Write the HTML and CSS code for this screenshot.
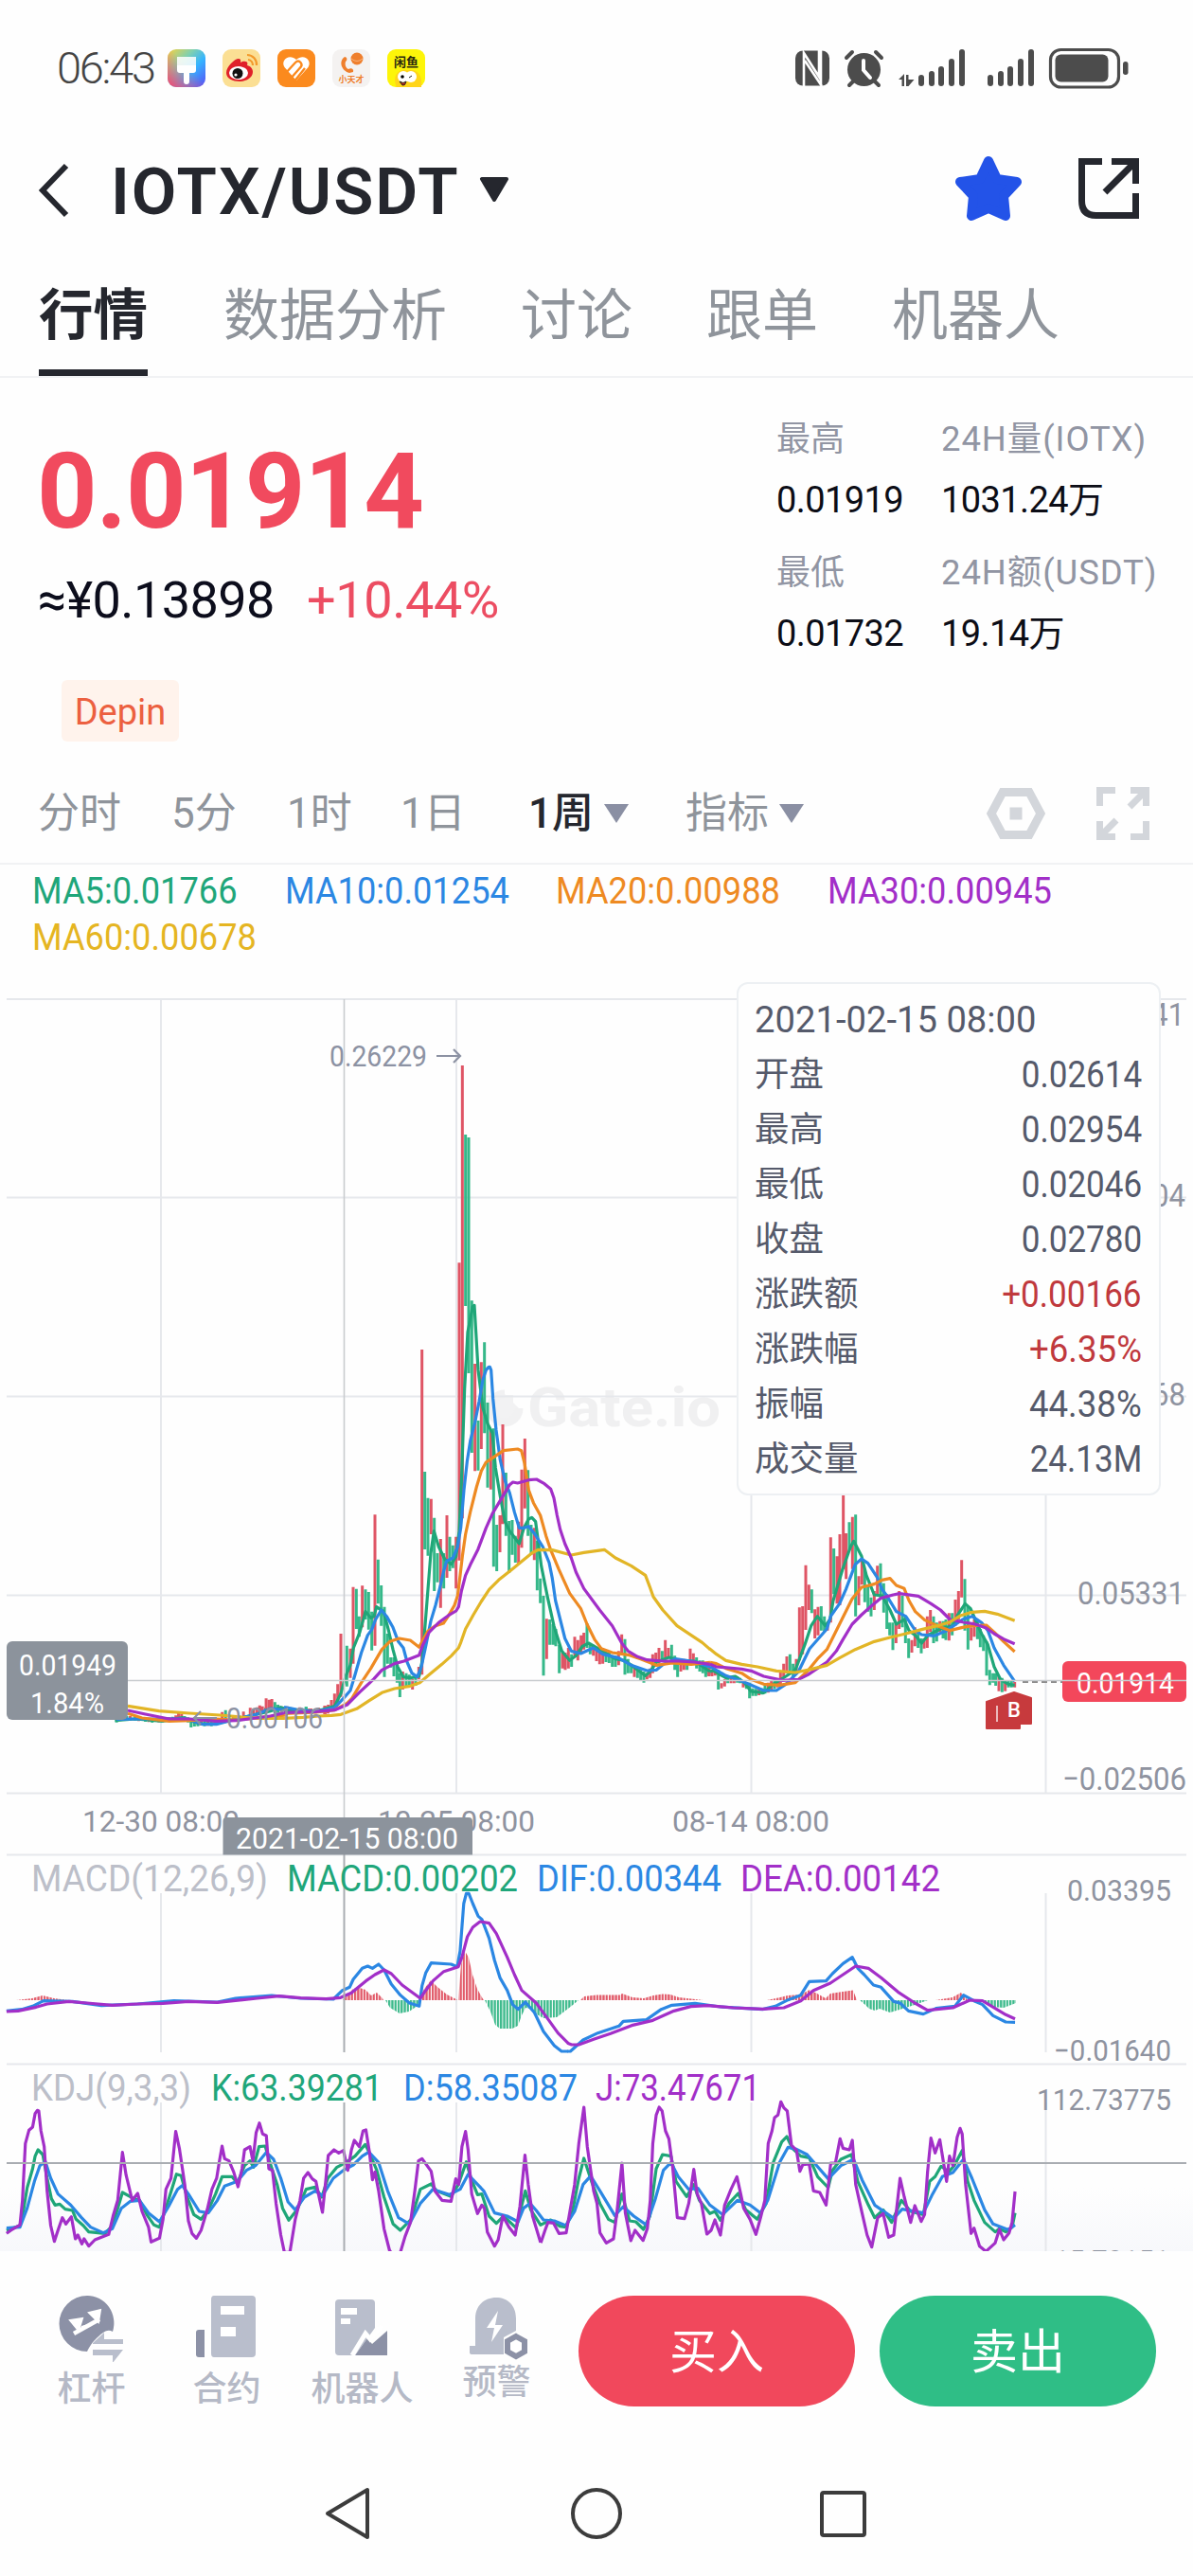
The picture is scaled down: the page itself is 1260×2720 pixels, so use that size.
FILE: index.html
```html
<!DOCTYPE html>
<html lang="zh-CN">
<head>
<meta charset="utf-8">
<title>IOTX/USDT</title>
<link rel="stylesheet" href="styles.css">
</head>
<body>
<header class="status">
  <div class="status-left">
    <span class="clock">06:43</span>
    <svg class="app" viewBox="0 0 40 40">
      <defs>
        <linearGradient id="themeA" x1="0" y1="0" x2="1" y2="1"><stop offset="0" stop-color="#f7d23e"/><stop offset=".35" stop-color="#7fd0b0"/><stop offset=".6" stop-color="#35b4ff"/><stop offset="1" stop-color="#5a4bf5"/></linearGradient>
        <linearGradient id="themeB" x1="1" y1="0" x2="0" y2="1"><stop offset=".45" stop-color="#ff5a6a" stop-opacity="0"/><stop offset="1" stop-color="#ff3f6a"/></linearGradient>
      </defs>
      <rect width="40" height="40" rx="9" fill="url(#themeA)"/><rect width="40" height="40" rx="9" fill="url(#themeB)"/>
      <path d="M10 8h20v9H10z" fill="#fff" opacity=".85"/><path d="M10 17h20v5q0 3-3 3h-4v9a3 3 0 0 1-6 0v-9h-4q-3 0-3-3z" fill="#fff"/>
    </svg>
    <svg class="app" viewBox="0 0 40 40">
      <rect width="40" height="40" rx="9" fill="#fbdf94"/>
      <path d="M4 25c0-7 9-15 13-15 3 0 2 3 2 4 3-2 9-2 7 3 4 1 6 4 6 7 0 6-7 10-14 10S4 31 4 25z" fill="#e0202a"/>
      <ellipse cx="17" cy="25" rx="10" ry="7" fill="#fff"/><circle cx="16" cy="25.500" r="5.500" fill="#111"/><circle cx="14" cy="27" r="1.600" fill="#fff"/>
      <path d="M26 6a10 10 0 0 1 10 11M27 11a6 6 0 0 1 5 6" fill="none" stroke="#f39a2b" stroke-width="2.200"/>
    </svg>
    <svg class="app" viewBox="0 0 40 40">
      <rect width="40" height="40" rx="9" fill="#fb8a1e"/>
      <path d="M20 33 7.500 19C3 12 12 4 20 11c8-7 17 1 12.500 8z" fill="#fff"/>
      <path d="M8 26 19 14q3-3 5.500 0t-1 6L13 32M17 35 29 20" fill="none" stroke="#fb8a1e" stroke-width="2.400"/>
    </svg>
    <svg class="app" viewBox="0 0 40 40">
      <rect width="40" height="40" rx="9" fill="#f4f2f1"/>
      <path d="M13 8c-7 5-3 15 5 17l4-1c1-3-2-5-5-3-3-1-4-5-3-8 2-1 2-5-1-5z" fill="#ef7f2d"/>
      <circle cx="26" cy="10" r="6.500" fill="#ef7f2d"/><path d="M20 10q6 5 12 0" stroke="#f9b27a" fill="none"/>
      <text x="20" y="34.500" class="tiny orange">小天才</text>
    </svg>
    <svg class="app" viewBox="0 0 40 40">
      <rect width="40" height="40" rx="9" fill="#fdf509"/>
      <path d="M10 40C4 26 14 20 22 22c8-2 16 4 14 18z" fill="#ffd51a"/><circle cx="17" cy="29" r="6" fill="#fff"/><circle cx="25" cy="29" r="6" fill="#fff"/><circle cx="16" cy="29" r="1.800"/><path d="M23 30l3-2M13 34q4 3 7 0-1 5-4 4z" stroke="#222" fill="#c22"/>
      <text x="20" y="17.500" class="tiny dark">闲鱼</text>
    </svg>
  </div>
  <svg class="status-right" viewBox="841 50 352 44">
    <g fill="#4c4c4c">
      <rect x="841" y="53.500" width="36" height="37" rx="8"/>
      <path d="M850 91V56l16 25V58M866 53v8M851 64l18 27M868 90V53" fill="none" stroke="#fff" stroke-width="2.600"/>
      <circle cx="913.500" cy="73.500" r="17.500"/>
      <path d="M895 61l6-6M932 61l-6-6M898 90l5-5M929 90l-5-5" stroke="#4c4c4c" stroke-width="4" stroke-linecap="round"/>
      <path d="M913 64v10l7 8" stroke="#fff" stroke-width="4" fill="none" stroke-linecap="round"/>
      <path d="M950 84l6-6v13h-2.500V84zM958 79h2.500v5h6l-6 7H958z"/>
      <rect x="971" y="79" width="6" height="12" rx="3"/><rect x="982" y="75" width="6" height="16" rx="3"/><rect x="992" y="70" width="6" height="21" rx="3"/><rect x="1003" y="62" width="6" height="29" rx="3"/><rect x="1014" y="52" width="6" height="39" rx="3"/>
      <rect x="1044" y="79" width="6" height="12" rx="3"/><rect x="1055" y="75" width="6" height="16" rx="3"/><rect x="1065" y="70" width="6" height="21" rx="3"/><rect x="1076" y="62" width="6" height="29" rx="3"/><rect x="1087" y="52" width="6" height="39" rx="3"/>
      <rect x="1110.500" y="52.500" width="72" height="39.500" rx="11" fill="none" stroke="#4c4c4c" stroke-width="3.200"/>
      <rect x="1115.500" y="57.500" width="56" height="29" rx="6"/><rect x="1187" y="65" width="5.500" height="14" rx="2.700"/>
    </g>
  </svg>
</header>

<nav class="titlebar">
  <svg class="back" viewBox="0 0 36 60"><path d="M31 4 6 30l25 26" fill="none" stroke="#25272e" stroke-width="6"/></svg>
  <h1>IOTX/USDT</h1>
  <svg class="caret" viewBox="0 0 32 28"><path d="M3 2h26L16 24z" fill="#25272e" stroke="#25272e" stroke-width="4" stroke-linejoin="round"/></svg>
  <svg class="star" viewBox="0 0 72 70"><path d="M36 6 45 25 66 28 52 43 54 64 36 56 18 64 20 43 6 28 27 25z" fill="#2353e8" stroke="#2353e8" stroke-width="10" stroke-linejoin="round"/></svg>
  <svg class="share" viewBox="0 0 66 66"><path d="M26 4.500H4.500V46q0 15.500 15 15.500H61.500V38M36 4.500h25.500V28M61 5 29 37" fill="none" stroke="#25272e" stroke-width="7"/></svg>
</nav>

<nav class="tabs"><a class="on">行情</a><a>数据分析</a><a>讨论</a><a>跟单</a><a>机器人</a></nav>

<section class="quote">
  <div class="quote-main">
    <div class="price">0.01914</div>
    <div class="sub"><span>≈¥0.13898</span><span class="up">+10.44%</span></div>
    <span class="tag">Depin</span>
  </div>
  <dl class="stats">
    <div><dt>最高</dt><dd>0.01919</dd></div><div class="wide"><dt>24H量(IOTX)</dt><dd>1031.24万</dd></div>
    <div><dt>最低</dt><dd>0.01732</dd></div><div class="wide"><dt>24H额(USDT)</dt><dd>19.14万</dd></div>
  </dl>
</section>

<nav class="periods">
  <a>分时</a><a>5分</a><a>1时</a><a>1日</a>
  <a class="on">1周<svg viewBox="0 0 26 20"><path d="M0 0h26L13 20z"/></svg></a>
  <a>指标<svg viewBox="0 0 26 20"><path d="M0 0h26L13 20z"/></svg></a>
  <svg class="hex" viewBox="0 0 62 54"><path d="M17 4.500h28L57 27 45 49.500H17L5 27z" fill="none" stroke="#d3d6db" stroke-width="9"/><path d="M24.500 20.500h13v13h-13z" fill="#d3d6db"/></svg>
  <svg class="expand" viewBox="0 0 56 56"><path d="M3.500 20V3.500H20M36 3.500h16.500V20M52 4 35 21M52.500 36v16.500H36M20 52.500H3.500V36M4 52l17-17" fill="none" stroke="#d3d6db" stroke-width="7"/></svg>
</nav>

<div class="legend"><span class="c5"><i>MA5:0.01766</i></span><span class="c10"><i>MA10:0.01254</i></span><span class="c20"><i>MA20:0.00988</i></span><span class="c30"><i>MA30:0.00945</i></span><span class="c60"><i>MA60:0.00678</i></span></div>

<main class="chart">
<svg class="plot" viewBox="0 1020 1260 1357" width="1260" height="1357">
  <defs>
    <pattern id="barsUp" width="3.280" height="8" patternUnits="userSpaceOnUse"><rect width="2.300" height="8" fill="#e15a69"/></pattern>
    <pattern id="barsDown" width="3.280" height="8" patternUnits="userSpaceOnUse"><rect width="2.300" height="8" fill="#3dba8c"/></pattern>
    <linearGradient id="foot" x1="0" y1="0" x2="0" y2="1"><stop offset="0" stop-color="#f7f8fb" stop-opacity="0"/><stop offset="1" stop-color="#f7f8fb"/></linearGradient>
  </defs>
  <rect x="0" y="2310" width="1260" height="67" fill="url(#foot)"/>
  <g class="mark">
    <path d="M533 1472a15 15 0 1 0 15 15" fill="none" stroke="#f1f1f2" stroke-width="9"/>
    <path d="M533 1473h9v14h-9z"/>
    <text x="557" y="1506" textLength="204" lengthAdjust="spacingAndGlyphs">Gate.io</text>
  </g>
  <g class="grid">
    <path d="M7 1055H1253M7 1264.500H1253M7 1474.500H1253M7 1684.500H1253M7 1893.500H1253M7 1958.500H1253M7 2179.500H1253"/>
    <path d="M170 1055V1893M482 1055V1893M793.500 1055V1893M1104.500 1055V1893"/>
    <path d="M170 1999V2167M482 1999V2167M793.500 1999V2167M1104.500 1999V2167M170 2220V2377M482 2220V2377M793.500 2220V2377M1104.500 2220V2377"/>
  </g>

  <g class="axis">
    <text x="1139" y="1083" textLength="112" lengthAdjust="spacingAndGlyphs">0.28841</text>
    <text x="1139" y="1274" textLength="113" lengthAdjust="spacingAndGlyphs">0.21004</text>
    <text x="1139" y="1484" textLength="113" lengthAdjust="spacingAndGlyphs">0.13168</text>
    <text x="1138" y="1694" textLength="113" lengthAdjust="spacingAndGlyphs">0.05331</text>
    <text x="1122" y="1890" textLength="131" lengthAdjust="spacingAndGlyphs">−0.02506</text>
    <g class="small">
      <text x="87" y="1934" textLength="166" lengthAdjust="spacingAndGlyphs">12-30 08:00</text>
      <text x="399" y="1934" textLength="166" lengthAdjust="spacingAndGlyphs">10-25 08:00</text>
      <text x="710" y="1934" textLength="166" lengthAdjust="spacingAndGlyphs">08-14 08:00</text>
      <text x="1127" y="2007" textLength="110" lengthAdjust="spacingAndGlyphs">0.03395</text>
      <text x="1113" y="2176" textLength="124" lengthAdjust="spacingAndGlyphs">−0.01640</text>
      <text x="1095" y="2228" textLength="142" lengthAdjust="spacingAndGlyphs">112.73775</text>
      <text x="1113" y="2397.500" textLength="122" lengthAdjust="spacingAndGlyphs">15.73151</text>
    </g>
  </g>

  <!-- candles -->
  <g transform="translate(0 1700) scale(.35714 .33333)">
    <path class="k down" d="M345 340V356M355 338V352M375 336V350M400 335V350M430 342V354M450 345V357M480 342V356M510 338V352M546 336V350M556 340V356M565 346V372M575 348V369M585 352V368M605 350V368M625 350V368M667 317V352M705 335V350M785 310V325M813 292V328M822 300V326M850 310V328M880 312V330M905 307V325M932 312V326"/>
    <path class="k up" d="M385 336V350M410 338V352M440 342V355M470 342V356M500 340V354M520 334V350M528 322V345M537 330V348M595 350V366M615 348V367M635 345V364M657 323V355M690 338V352M720 322V342M740 310V335M750 314V333M760 308V330M768 302V325M776 305V326M787 280V320M796 284V318M804 282V318M832 305V328M870 314V330M890 314V330M920 312V328M945 312V327M960 304V330M970 306V328"/>
  </g>
  <g transform="translate(300 1400) scale(.33333)">
    <path class="k up" d="M10 1205V1225M30 1212V1230M50 1208V1228M80 1212V1228M110 1210V1226M130 1203V1230M140 1200V1225M150 1185V1215M160 1165V1212M170 1135V1200M180 975V1175M210 1022V1115M219 827V1070M248 823V955M288 598V1013M376 1095V1152M407 1118V1152M427 1080V1120M437 75V1105M466 548V660M496 675V893M516 600V798M545 668V832M555 -200V743M565 -825V610M605 120V460M625 115V390M655 330V518M684 600V717M693 312V628M743 620V755M753 455V703M763 357V578M793 640V742M832 928V1055M882 1035V1085M891 1035V1090M901 1020V1085M921 985V1045M931 995V1060M941 980V1040M950 972V1025M980 1010V1045M990 1020V1062M1000 1025V1072M1010 1030V1070M1060 1030V1075M1070 977V1040M1110 1080V1112M1150 1100V1120M1160 1085V1115M1168 1040V1100M1178 1035V1080M1188 1020V1070M1208 995V1055M1218 1020V1050M1257 1055V1095M1267 1055V1090M1287 1022V1070M1297 1037V1070"/>
    <path class="k down" d="M20 1208V1226M70 1207V1226M100 1212V1228M199 1013V1142M229 833V960M238 920V985M258 835V930M268 843V962M278 905V1028M298 740V880M308 822V950M318 890V1112M328 975V1070M338 1050V1082M348 1050V1110M358 1075V1130M367 1100V1176M387 1100V1140M397 1105V1140M417 1110V1140M446 462V708M456 545V728M476 608V840M486 720V812M506 720V832M525 668V777M535 695V767M575 -606V-63M585 -597V150M595 -80V402M615 300V458M635 52V340M645 243V512M664 325V763M674 630V777M703 465V665M713 618V783M723 615V725M733 665V750M773 457V665M783 630V725M802 680V838M812 800V878M822 855V1108M842 930V1010M852 945V1010M861 960V1015M872 1010V1100M911 1040V1080M960 943V1020M970 1005V1040M1020 1030V1065M1030 1035V1068M1040 1045V1080M1050 1045V1080M1080 992V1105M1090 1055V1100M1100 1070V1100M1120 1090V1115M1130 1090V1125M1140 1095V1130M1198 1030V1065M1228 1010V1060M1238 1045V1090M1247 1060V1112M1277 1060V1090M1307 1050V1085M1317 1060V1095M1327 1060V1100M1337 1070V1105M1347 1075V1108"/>
  </g>
  <g transform="translate(740 1540) scale(.33333)">
    <path class="k up" d="M26 662V690M36 668V690M46 665V688M66 712V728M76 700V722M96 695V712M106 688V712M135 705V725M185 730V750M214 710V742M224 705V738M244 700V725M253 675V720M263 650V692M273 627V680M303 635V680M313 472V640M323 468V620M333 338V543M343 400V480M362 478V570M372 470V560M402 520V545M412 250V520M432 310V460M441 240V465M452 105V350M461 237V382M481 185V350M501 373V465M511 320V400M550 420V480M560 340V430M619 525V585M629 420V540M669 575V615M679 535V595M708 570V602M718 500V600M728 480V550M758 515V550M787 490V577M807 447V530M817 420V510M827 322V440M857 535V577M867 510V565M945 690V737M965 705V737M995 708V725"/>
    <path class="k down" d="M6 648V675M16 658V692M56 670V732M86 690V712M116 690V710M125 695V712M145 710V730M155 710V760M165 728V752M175 730V752M195 728V748M204 720V745M234 705V730M283 620V675M293 650V695M352 415V490M382 468V545M392 500V550M422 285V430M471 202V290M491 178V500M520 350V455M530 400V485M540 440V500M570 332V440M580 395V488M590 430V540M599 520V560M609 520V607M639 435V535M649 500V585M659 570V632M689 545V600M699 570V617M738 500V585M748 520V580M768 515V570M777 510V575M797 490V560M837 382V545M847 470V605M877 515V572M886 540V598M896 560V610M906 580V688M916 670V718M926 680V710M935 680V720M955 695V740M975 705V725M985 705V725"/>
  </g>

  <!-- moving averages -->
  <g class="line" transform="translate(0 1700) scale(.35714 .33333)">
    <polyline class="c5" points="340,350 400,345 480,352 540,341 590,360 640,360 700,345 800,320 830,308 860,318"/>
    <polyline class="c10" points="345,346 420,345 550,345 600,362 640,362 700,345 760,330 800,312 840,316"/>
    <polyline class="c20" points="378,328 420,342 500,352 560,350 640,345 700,348 800,337 850,333"/>
    <polyline class="c60" points="378,304 470,320 560,327 650,333 750,343 840,343"/>
    <polyline class="c30" points="378,318 430,330 500,345 560,345 640,352 700,350 800,336 840,326"/>
  </g>
  <g class="line" transform="translate(300 1400) scale(.33333)">
    <polyline class="c5" points="0,1218 100,1222 160,1205 180,1165 195,1110 210,1075 220,1020 240,970 258,905 275,925 285,920 293,890 315,905 330,960 345,1025 360,1080 378,1112 400,1115 428,1110 438,1060 450,910 465,720 475,650 490,700 510,740 530,755 545,730 555,650 563,470 572,200 582,20 590,-20 597,-60 603,-65 608,20 615,140 630,260 645,310 660,340 670,450 685,540 700,620 715,650 730,670 745,690 760,640 775,612 785,607 797,620 805,680 815,760 835,860 855,950 880,1030 905,1060 925,1045 945,1015 965,1005 1000,1025 1050,1055 1080,1060 1120,1090 1145,1108 1160,1095 1180,1065 1220,1050 1250,1060 1300,1062 1350,1095"/>
    <polyline class="c10" points="0,1208 40,1215 100,1222 160,1210 190,1178 210,1155 225,1105 245,1035 265,980 278,962 290,930 308,900 325,920 345,955 362,1000 378,1020 390,1065 405,1100 422,1112 435,1080 450,1010 465,935 480,885 495,825 505,780 515,745 535,735 550,700 560,640 570,520 580,430 590,365 605,305 618,240 630,170 640,140 648,131 652,130 656,140 662,230 672,330 685,425 700,490 715,530 730,590 745,640 760,640 775,635 795,660 820,700 840,750 850,800 860,870 875,930 890,990 910,1030 940,1038 980,1020 1010,1040 1060,1052 1100,1075 1150,1092 1180,1090 1200,1073 1240,1055 1290,1062 1350,1080"/>
    <polyline class="c20" points="0,1228 100,1224 160,1217 200,1195 215,1180 245,1130 275,1085 310,1025 335,1000 365,990 400,996 428,1018 440,995 455,968 480,950 505,942 520,920 540,885 550,855 558,790 565,730 575,660 590,590 610,510 625,460 640,432 670,412 695,395 740,390 752,395 762,435 775,520 790,560 812,600 830,665 845,710 870,770 905,847 940,895 960,945 985,995 1005,1022 1040,1035 1090,1042 1130,1055 1180,1075 1230,1068 1290,1072 1350,1066"/>
    <polyline class="c60" points="0,1243 60,1240 110,1236 150,1234 180,1231 230,1213 270,1187 310,1162 350,1149 400,1141 430,1130 460,1105 500,1072 530,1045 553,1020 560,1003 575,960 600,915 625,873 650,835 680,805 720,773 760,740 785,720 805,709 850,710 910,726 950,718 1015,709 1050,735 1100,760 1145,790 1160,830 1170,858 1200,900 1245,950 1290,980 1325,1003 1350,1025"/>
    <polyline class="c30" points="0,1225 100,1222 160,1217 200,1200 240,1160 285,1118 310,1090 350,1070 380,1062 428,1043 440,1010 460,970 490,940 520,918 545,903 553,890 562,840 575,790 590,757 615,707 640,640 660,595 690,545 715,503 725,495 740,498 775,488 800,486 825,500 845,517 855,545 865,600 875,645 890,690 910,735 925,780 950,832 1000,900 1040,950 1070,1005 1090,1030 1120,1048 1150,1058 1200,1062 1250,1062 1300,1065 1350,1072"/>
  </g>
  <g class="line" transform="translate(740 1540) scale(.33333)">
    <polyline class="c5" points="30,675 40,672 80,695 110,690 140,712 160,738 200,742 230,715 270,690 300,670 330,590 350,530 370,500 395,530 410,510 420,450 450,350 475,280 485,262 510,310 525,370 550,432 575,435 600,480 620,525 645,510 660,545 680,560 700,585 720,560 760,540 800,530 815,495 838,460 855,475 870,510 890,555 910,590 930,660 950,700 975,715 995,718"/>
    <polyline class="c10" points="30,660 40,665 80,688 130,705 165,720 200,735 240,735 270,715 310,675 345,603 400,540 412,500 440,460 460,415 490,335 510,318 530,332 560,378 575,415 590,435 620,485 650,500 680,545 700,558 740,562 780,545 830,510 860,500 890,520 910,545 930,600 960,655 995,706"/>
    <polyline class="c20" points="30,646 50,650 80,665 130,680 160,700 200,715 250,718 300,710 340,672 370,635 400,605 425,555 450,505 480,445 510,408 550,398 575,385 600,380 620,402 645,412 660,450 680,485 710,512 750,530 790,545 830,535 860,530 905,528 930,550 960,580 995,612"/>
    <polyline class="c30" points="30,652 50,660 130,667 160,673 200,690 260,703 310,700 340,685 370,665 400,645 430,610 450,575 480,525 510,495 540,468 570,443 610,432 630,428 690,436 730,460 760,480 790,510 830,518 870,525 905,537 930,555 960,572 995,587"/>
    <polyline class="c60" points="28,602 50,620 80,640 130,652 180,660 240,673 300,678 350,668 400,655 440,632 490,605 550,580 600,567 650,555 700,542 750,530 790,518 825,497 860,487 900,484 940,493 995,514"/>
  </g>

  <!-- MACD -->
  <path fill="url(#barsUp)" d="M17 2112 34 2110 45 2107 57 2110 72 2112z"/>
  <path fill="url(#barsUp)" d="M362 2112 373 2100 380 2099 386 2101 392 2107 398 2104 404 2110 405 2112zM443 2112 448 2100 455 2091 462 2098 472 2106 482 2111 483 2112zM484 2112 487 2074 491 2060 495 2067 499 2085 504 2100 509 2109 511 2112zM613 2112 617 2108 630 2106.500 655 2106.500 657 2105 668 2109 680 2110 690 2107 700 2105.500 708 2106 717 2109 743 2112zM810 2112 824 2109 832 2107 846 2106 855 2101 863 2105 872 2110 877 2105 890 2103 901 2101.500 905 2112zM988 2112 1006 2109 1015 2104 1022 2112z"/>
  <path fill="url(#barsDown)" d="M407 2112 412 2120 422 2126 432 2124 441 2118 443 2112zM512 2112 518 2124 523 2138 528 2142 541 2142 547 2139 551 2128 555 2120 560 2121 567 2127 574 2131 588 2130 596 2124 605 2117 611 2112zM908 2112 914 2117 918 2121 924 2123 929 2121 940 2125 950 2122 966 2117 980 2112zM1036 2112 1048 2119 1060 2120 1073 2115 1073 2112z"/>
  <g class="line" transform="translate(0 1930) scale(.38265 .33333)">
    <polyline class="c10" points="18,580 60,575 90,565 120,548 200,550 280,563 380,558 480,548 600,552 650,540 750,531 830,540 920,543 945,515 965,505 975,480 1000,445 1015,438 1028,445 1045,432 1060,450 1080,495 1105,530 1130,555 1157,565 1165,500 1175,460 1190,428 1245,432 1262,440 1270,390 1280,240 1287,208 1294,208 1305,240 1320,280 1330,290 1350,350 1365,420 1380,475 1400,515 1415,560 1430,575 1450,552 1475,585 1500,645 1530,690 1550,708 1568,708"/>
    <polyline class="c30" points="18,582 50,580 100,568 130,558 190,550 240,555 310,562 380,558 450,556 520,550 600,553 650,547 710,540 770,533 830,539 900,542 940,538 970,523 1010,485 1035,465 1060,450 1080,462 1110,498 1160,540 1175,515 1195,485 1225,455 1265,440 1275,410 1290,345 1305,315 1325,297 1350,302 1370,335 1400,410 1420,465 1440,515 1480,555 1510,602 1540,650 1568,682"/>
  </g>
  <g class="line" transform="translate(560 1930) scale(.44643 .33333)">
    <polyline class="c10" points="88,708 95,708 125,672 160,650 210,628 220,613 275,608 310,575 335,562 390,556 450,567 550,575 580,565 610,545 640,530 660,487 700,485 715,462 740,430 762,410 775,445 790,465 812,498 830,505 860,550 875,555 895,580 930,590 960,572 1005,565 1025,530 1050,548 1070,560 1095,595 1125,615 1147,616"/>
    <polyline class="c30" points="88,682 98,687 115,687 150,670 190,652 240,626 290,610 340,580 380,566 420,563 480,570 550,574 600,570 640,548 670,515 710,492 740,465 770,438 800,445 830,475 870,520 910,555 940,578 1000,570 1040,546 1070,548 1100,572 1125,592 1147,605"/>
  </g>

  <!-- KDJ -->
  <g class="line" transform="translate(0 1930) scale(.38265 .33333)">
    <polyline class="c5" points="18,1275 55,1260 65,1210 75,1140 90,1080 97,1040 105,1020 118,1035 130,1110 142,1175 152,1195 165,1192 180,1208 200,1212 210,1240 230,1260 245,1280 290,1285 310,1260 325,1205 338,1155 365,1172 385,1180 405,1225 425,1258 440,1265 455,1215 470,1160 487,1097 500,1102 515,1165 535,1225 555,1240 575,1210 595,1160 613,1105 640,1105 655,1125 675,1070 690,1055 700,1075 715,1010 732,1008 745,1060 765,1130 780,1205 797,1243 820,1210 845,1145 870,1138 888,1170 905,1110 930,1075 955,1060 980,1040 1008,1003 1020,1030 1040,1085 1060,1170 1085,1255 1105,1275 1135,1240 1160,1145 1190,1128 1205,1150 1245,1168 1265,1130 1287,1058 1300,1110 1318,1162 1330,1160 1350,1230 1370,1253 1390,1230 1425,1268 1437,1210 1450,1150 1465,1210 1492,1258 1520,1242 1545,1262 1562,1265"/>
    <polyline class="c10" points="18,1268 55,1265 75,1205 95,1120 110,1070 125,1057 140,1110 160,1160 195,1195 225,1235 250,1265 285,1283 310,1270 335,1205 360,1183 385,1180 410,1220 440,1248 465,1200 490,1145 503,1133 520,1160 550,1215 575,1220 600,1180 620,1135 655,1120 680,1085 705,1070 735,1028 755,1050 775,1110 795,1185 815,1210 840,1170 870,1150 890,1165 920,1110 950,1083 975,1068 1000,1040 1018,1027 1045,1060 1070,1150 1100,1235 1130,1255 1160,1190 1195,1145 1240,1162 1270,1145 1292,1098 1335,1150 1365,1220 1400,1230 1430,1248 1445,1205 1463,1190 1480,1212 1500,1242 1530,1245 1562,1260"/>
    <polyline class="c30" points="18,1285 30,1275 55,1258 62,1180 70,1000 80,958 90,948 97,905 103,895 107,897 113,960 122,1010 130,1150 140,1260 150,1310 160,1275 172,1235 182,1255 197,1232 208,1302 215,1290 226,1318 232,1302 245,1325 262,1305 300,1288 312,1230 325,1180 338,1028 348,1100 365,1180 380,1158 392,1215 410,1265 417,1312 440,1300 450,1240 458,1145 472,1110 485,962 495,1015 510,1130 520,1245 530,1285 542,1300 555,1275 572,1210 585,1145 598,1110 605,1060 613,1008 620,1048 632,1055 645,1090 657,1137 668,1080 675,1020 690,1010 698,1055 707,965 716,935 725,970 735,975 742,1080 752,1085 762,1190 775,1290 785,1345 800,1345 815,1240 828,1180 838,1110 850,1092 862,1112 872,1120 880,1165 890,1218 898,1130 906,1038 922,1020 935,1030 948,1022 960,1085 970,1020 978,990 992,1010 1002,960 1010,957 1020,1030 1028,1115 1035,1090 1045,1150 1060,1270 1075,1338 1082,1350 1105,1345 1118,1295 1133,1250 1145,1150 1155,1055 1165,1048 1190,1088 1200,1150 1220,1180 1245,1183 1258,1112 1266,1130 1275,1010 1285,962 1292,1020 1302,1160 1318,1222 1330,1195 1337,1205 1345,1280 1365,1325 1375,1305 1388,1230 1405,1265 1422,1290 1435,1200 1449,1037 1458,1130 1470,1230 1492,1313"/>
  </g>
  <g class="line" transform="translate(560 1930) scale(.44643 .33333)">
    <polyline class="c5" points="84,1265 100,1215 115,1110 127,1047 145,1120 165,1190 185,1240 200,1250 217,1160 235,1245 250,1248 268,1272 283,1230 298,1080 313,1035 333,1040 345,1120 370,1168 387,1130 400,1180 425,1222 437,1215 450,1243 470,1190 492,1158 510,1210 537,1240 558,1190 575,1060 595,995 607,978 620,1015 640,1040 660,1045 680,1105 705,1140 715,1085 735,1050 760,1035 775,1120 800,1195 815,1235 835,1210 855,1250 878,1180 900,1215 930,1225 945,1120 958,1105 972,1072 990,1090 1003,1070 1022,1022 1035,1120 1050,1180 1075,1250 1100,1280 1110,1270 1125,1280 1140,1265 1147,1220"/>
    <polyline class="c10" points="84,1260 105,1215 125,1130 143,1103 165,1150 200,1228 220,1200 245,1230 275,1258 295,1180 315,1085 333,1060 350,1105 375,1145 397,1142 425,1195 455,1225 490,1180 520,1195 545,1220 562,1180 590,1060 610,1012 630,1018 655,1035 705,1112 735,1070 765,1050 785,1115 815,1195 860,1237 880,1208 930,1220 950,1165 975,1105 1000,1092 1025,1050 1045,1110 1075,1210 1095,1255 1130,1273 1147,1258"/>
    <polyline class="c30" points="25,1315 35,1275 42,1250 55,1252 68,1285 85,1283 92,1230 105,1130 115,1000 127,885 135,1010 150,1150 158,1190 165,1283 180,1315 197,1302 205,1220 217,1062 225,1220 238,1308 248,1275 267,1307 277,1270 284,1180 290,1000 298,910 305,885 312,897 320,960 328,985 337,1075 348,1235 365,1238 375,1190 387,1082 395,1160 405,1190 418,1287 428,1275 437,1242 450,1290 460,1195 475,1145 489,1105 498,1160 505,1205 520,1240 534,1288 545,1235 555,1180 563,1000 572,960 578,918 586,910 593,868 600,887 608,897 618,1005 630,1022 638,1088 645,1067 660,1065 670,1150 685,1155 700,1195 711,1062 722,1062 733,985 740,1015 755,1020 762,990 770,1130 785,1220 797,1290 808,1328 822,1235 835,1222 848,1297 860,1290 875,1110 885,1170 900,1250 910,1197 925,1247 933,1225 940,1090 948,983 958,1030 969,988 985,1120 992,1040 1000,1070 1010,980 1017,952 1022,970 1030,1130 1043,1285 1050,1268 1063,1325 1078,1342 1100,1315 1110,1272 1120,1305 1133,1283 1140,1250 1147,1152"/>
  </g>

  <g class="extreme">
    <text x="348" y="1126" textLength="103" lengthAdjust="spacingAndGlyphs">0.26229</text>
    <path d="M461 1115H486M479 1108l7 7-7 7"/>
    <text x="239" y="1825" textLength="102" lengthAdjust="spacingAndGlyphs">0.00106</text>
    <path d="M229 1814H204M212 1807l-7 7 7 7"/>
  </g>
  <path d="M1080 1776H1122" stroke="#888" stroke-width="2" stroke-dasharray="6 4"/>
  <rect x="1122" y="1754" width="131" height="43" rx="6" fill="#f3475b"/>
  <text class="white" x="1137" y="1788" textLength="103" lengthAdjust="spacingAndGlyphs">0.01914</text>
  <g class="cross">
    <path d="M363.500 1055V1958M7 1774.500H1253"/>
    <path class="deep" d="M363.500 1958V2167M363.500 2220V2377M7 2284H1253"/>
  </g>
  <path fill="#c73a3d" stroke="#c73a3d" stroke-width="2" stroke-linejoin="round" d="M1042 1797 1071 1787 1089 1793V1820H1077V1825H1042z"/>
  <path d="M1053 1801V1818" stroke="#fff" stroke-width="1.300"/>
  <text class="badge" x="1064" y="1812.500">B</text>
  <rect x="7" y="1733" width="128" height="83" rx="6" fill="#8c939c"/>
  <text class="white" x="20" y="1769" textLength="103" lengthAdjust="spacingAndGlyphs">0.01949</text>
  <text class="white" x="32" y="1809" textLength="78" lengthAdjust="spacingAndGlyphs">1.84%</text>
  <path fill="#8c939c" d="M239 1919H495q4 0 4 4V1958.500H235.500V1923q0-4 4-4z"/>
  <text class="white" x="249" y="1952" textLength="235" lengthAdjust="spacingAndGlyphs">2021-02-15 08:00</text>

  <g class="ind">
    <g class="muted"><text x="33" y="1997" textLength="250" lengthAdjust="spacingAndGlyphs">MACD(12,26,9)</text><text x="33" y="2218" textLength="169" lengthAdjust="spacingAndGlyphs">KDJ(9,3,3)</text></g>
    <text class="t5" x="303" y="1997" textLength="244" lengthAdjust="spacingAndGlyphs">MACD:0.00202</text>
    <text class="t10" x="567" y="1997" textLength="195" lengthAdjust="spacingAndGlyphs">DIF:0.00344</text>
    <text class="t30" x="782" y="1997" textLength="211" lengthAdjust="spacingAndGlyphs">DEA:0.00142</text>
    <text class="t5" x="223" y="2218" textLength="181" lengthAdjust="spacingAndGlyphs">K:63.39281</text>
    <text class="t10" x="426" y="2218" textLength="184" lengthAdjust="spacingAndGlyphs">D:58.35087</text>
    <text class="t30" x="629" y="2218" textLength="174" lengthAdjust="spacingAndGlyphs">J:73.47671</text>
  </g>
</svg>
<div class="popup">
  <div class="row"><b class="date">2021-02-15 08:00</b></div>
  <div class="row"><span>开盘</span><b>0.02614</b></div>
  <div class="row"><span>最高</span><b>0.02954</b></div>
  <div class="row"><span>最低</span><b>0.02046</b></div>
  <div class="row"><span>收盘</span><b>0.02780</b></div>
  <div class="row"><span>涨跌额</span><b class="rise">+0.00166</b></div>
  <div class="row"><span>涨跌幅</span><b class="rise pct">+6.35%</b></div>
  <div class="row"><span>振幅</span><b class="pct">44.38%</b></div>
  <div class="row"><span>成交量</span><b>24.13M</b></div>
</div>
</main>

<footer class="actions">
  <a><svg viewBox="0 0 70 70"><path fill="#8c91a6" d="M30 0a28 29 0 0 1 27 38c-6-4-12 2-18 8-5 5-7 9-9 13A29 29 0 0 1 30 0z"/><path d="M16 40 43 25" fill="none" stroke="#fff" stroke-width="4.500"/><path d="M12 26l13-2-4 13zM32 18l12-3-2 13zM24 33l8-2" fill="#fff" stroke="#fff" stroke-width="2"/><path fill="#b9becc" d="M36 50l12-11v7h20v5H36zM36 57h32l-11 14v-8H36z"/></svg>杠杆</a>
  <a><svg viewBox="0 0 70 70"><path fill="#b9becc" d="M21 0h40q4 0 4 4v57q0 4-4 4H21q-3 0-3-4V4q0-4 3-4z"/><path fill="#8c91a6" d="M2 39q0-3 3-3h6v29H5q-3 0-3-3z"/><path fill="#fff" d="M28 11h25v9H28zM28 33h16v10H28z"/></svg>合约</a>
  <a><svg viewBox="0 0 70 70"><path fill="#b9becc" d="M10 4h34q4 0 4 4v26L27 63H10q-4 0-4-4V8q0-4 4-4z"/><path fill="#8c91a6" d="M27 63l13-18 5 6 16-14v26z"/><path fill="#fff" d="M12 13h17v7H12zM12 24h10v6H12z"/><path d="M24 63l14-23 5 6 12-14" fill="none" stroke="#fff" stroke-width="5"/></svg>机器人</a>
  <a class="lift"><svg viewBox="0 0 70 70"><path fill="#b9becc" d="M6 60v-7h6V24C12 10 22 2 34 2s21 8 21 22v13L42 44v18H9q-3 0-3-2z"/><path fill="#fff" d="M36 16 24 34h8l-3 15 12-18h-8z"/><path d="M55 43l9 5v11l-9 5-9-5V48z" fill="#fff" stroke="#8c91a6" stroke-width="6"/></svg>预警</a>
  <button class="buy">买入</button>
  <button class="sell">卖出</button>
</footer>

<nav class="sysnav">
  <svg viewBox="0 0 60 60"><path d="M49 5v50L7 30z" fill="none" stroke="#3c3c3c" stroke-width="4" stroke-linejoin="round"/></svg>
  <svg viewBox="0 0 60 60"><circle cx="30" cy="30" r="25" fill="none" stroke="#3c3c3c" stroke-width="4"/></svg>
  <svg viewBox="0 0 60 60"><rect x="7" y="8" width="45" height="45" rx="2" fill="none" stroke="#3c3c3c" stroke-width="4"/></svg>
</nav>
</body>
</html>
```
FILE: styles.css
```css
* { box-sizing: border-box; }
body {
  margin: 0;
  width: 1260px;
  height: 2720px;
  overflow: hidden;
  background: #fefefe;
  color: #25272e;
  font-family: Roboto, "Noto Sans CJK SC", sans-serif;
  display: flex;
  flex-direction: column;
}
svg { display: block; flex: none; }

/* status bar */
.status { height: 144px; display: flex; justify-content: space-between; align-items: center; padding: 0 68px 0 60px; }
.status-left { display: flex; gap: 18px; align-items: center; }
.clock { font-size: 47px; font-weight: 300; letter-spacing: -2.300px; color: #444; width: 99px; white-space: nowrap; line-height: 50px; }
.app { width: 40px; height: 40px; }
.status-right { width: 352px; height: 44px; }
.tiny { font-size: 9px; text-anchor: middle; font-weight: 700; }
.tiny.orange { fill: #ef7f2d; }
.tiny.dark { fill: #2b2a10; font-size: 13px; }

/* title */
.titlebar { height: 114px; display: flex; align-items: center; padding: 0 56px 0 39px; }
.back { width: 36px; height: 60px; }
.titlebar h1 { margin: 3px 0 0 42px; width: 368px; font-size: 69px; font-weight: 600; letter-spacing: 2px; line-height: 80px; white-space: nowrap; }
.caret { width: 32px; height: 28px; margin-left: 21px; }
.star { width: 72px; height: 70px; margin: 0 0 4px auto; }
.share { width: 66px; height: 66px; margin: 0 0 4px 58px; }

/* tabs */
.tabs { height: 141px; border-bottom: 2px solid #f1f2f4; display: flex; gap: 78px; padding-left: 41px; font-size: 59px; line-height: 152px; color: #8f949b; }
.tabs a { height: 139px; }
.tabs .on { width: 115px; margin-right: 2px; font-size: 57.500px; color: #25272e; font-weight: 600; border-bottom: 7px solid #25272e; white-space: nowrap; }

/* quote */
.quote { height: 390px; display: flex; justify-content: space-between; padding-left: 40px; }
.quote-main { width: 700px; }
.price { margin: 65px 0 0 -1px; font-size: 111px; font-weight: 700; line-height: 110px; letter-spacing: -.900px; color: #f14a5e; }
.sub { display: flex; margin-top: 25px; font-size: 54px; line-height: 70px; color: #0c0d1c; letter-spacing: -.600px; }
.sub span:first-child { width: 284px; }
.sub .up { color: #ec4d62; letter-spacing: -.4px; }
.tag { display: inline-block; margin: 49px 0 0 25px; width: 124px; height: 65px; border-radius: 6px; background: #fff3ec; color: #ec6040; font-size: 38px; line-height: 68px; text-align: center; }
.stats { margin: 33px 0 0; width: 440px; display: grid; grid-template-columns: 174px 1fr; align-content: start; row-gap: 0; }
.stats div { height: 141px; }
.stats dt { font-size: 36px; line-height: 64px; height: 64px; color: #9195a3; white-space: nowrap; }
.stats .wide dt { font-size: 36.500px; letter-spacing: .9px; }
.stats dd { margin: 0; font-size: 38px; letter-spacing: -.6px; line-height: 64px; color: #0c0d16; white-space: nowrap; }

/* periods */
.periods { height: 124px; border-bottom: 2px solid #f1f2f4; display: grid; align-items: center; grid-template-columns: 141px 122px 120px 135px 166px 318px 116px auto; padding: 18px 0 0 40px; font-size: 44px; color: #8f949b; }
.periods a { display: flex; align-items: center; line-height: 60px; }
.periods .on { color: #25272e; font-weight: 500; }
.periods a svg { width: 26px; height: 20px; margin-left: 11px; fill: #8a8fa3; }
.hex { width: 62px; height: 54px; }
.expand { width: 56px; height: 56px; }

/* moving-average legend */
.legend { height: 107px; padding: 3px 0 0 34px; display: grid; grid-template-columns: 267px 286px 287px 1fr; grid-auto-rows: 49px; font-size: 39.400px; line-height: 49px; }
.legend i { display: inline-block; font-style: normal; white-space: nowrap; transform: scaleX(.92); transform-origin: left; }
.legend .c5 { color: #1fa67a; } .legend .c10 { color: #2b87e3; } .legend .c20 { color: #ee8a22; } .legend .c30 { color: #a22fc8; } .legend .c60 { color: #e5b522; }

/* chart */
.chart { position: relative; height: 1357px; overflow: hidden; }
.plot text { font-family: Roboto, sans-serif; }
.grid path { fill: none; stroke: #e6e8ec; stroke-width: 2; }
.mark text { font: 700 57px Roboto, sans-serif; fill: #f0f0f1; }
.mark path { fill: #f2f2f3; }
.axis text { font-size: 34px; fill: #8f93a0; }
.axis .small text { font-size: 31px; }
.k { fill: none; stroke-width: 3px; vector-effect: non-scaling-stroke; }
.k.up { stroke: #df5565; }
.k.down { stroke: #35b889; }
.line polyline { fill: none; stroke-width: 3.200px; stroke-linejoin: round; vector-effect: non-scaling-stroke; }
polyline.c5 { stroke: #1fa678; } polyline.c10 { stroke: #2b87e3; } polyline.c20 { stroke: #ee8a22; } polyline.c30 { stroke: #a22fc8; } polyline.c60 { stroke: #e2b526; }
.extreme text { font-size: 31px; fill: #8c92a3; }
.extreme path { fill: none; stroke: #8c92a3; stroke-width: 2.200; }
.plot .white { font-size: 31px; fill: #fff; }
.plot .badge { font-size: 22px; font-weight: 500; fill: #fff; }
.cross path { fill: none; stroke: #c9cccf; stroke-width: 1.600; }
.cross .deep { stroke: #a9adb2; stroke-width: 2; }
.ind text { font-size: 39.400px; }
.ind .muted { fill: #bcbfc9; } .ind .t5 { fill: #1fa67a; } .ind .t10 { fill: #2b87e3; } .ind .t30 { fill: #a22fc8; }

.popup { position: absolute; left: 778px; top: 17px; width: 448px; height: 542px; padding: 9px 18px 0 17px; background: #fefefe; border: 2px solid #edf0f3; border-radius: 12px; color: #555a6b; }
.row { height: 58px; display: flex; justify-content: space-between; align-items: center; font-size: 36.500px; line-height: 58px; }
.row b { font-weight: 400; font-size: 39.400px; transform: scaleX(.89); transform-origin: right; white-space: nowrap; }
.row .date { transform: scaleX(.97); transform-origin: left; }
.row .pct { transform: scaleX(.93); }
.row .rise { color: #c0393d; }

/* bottom actions */
.actions { height: 187px; display: flex; padding: 47px 0 0 41px; color: #b5b9c6; font-size: 36px; font-weight: 500; }
.actions a { width: 143px; display: flex; flex-direction: column; align-items: center; line-height: 40px; gap: 9px; padding-right: 32px; white-space: nowrap; }
.actions a svg { width: 70px; height: 70px; }
.actions a.lift { gap: 2px; width: 141px; }
.actions button { width: 292px; height: 117px; border: 0; border-radius: 58.500px; color: #fff; font: 400 50px Roboto, "Noto Sans CJK SC", sans-serif; padding: 0 0 7px; flex: none; }
.buy { background: #f1485c; }
.sell { background: #2fbe86; margin-left: 26px; }

.sysnav { flex: 1; display: flex; gap: 201px; padding: 60px 0 0 339px; }
.sysnav svg { width: 60px; height: 60px; }
```
